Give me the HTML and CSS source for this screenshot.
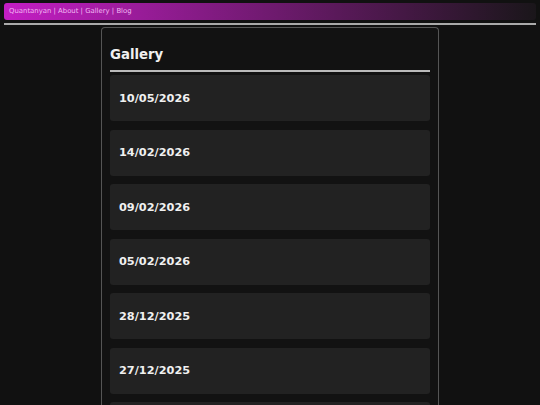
FILE: index.html
```html
<!DOCTYPE html>
<html lang="en">
  <head>
    <meta charset="UTF-8" />
    <meta name="viewport" content="width=device-width, initial-scale=1.0" />
    <title>Gallery</title>
    <link rel="stylesheet" href="styles.css">
  </head>
  <body>

      <div class="nav">
          <a href="#">Quantanyan</a> | <a href="#">About</a> | <a href="#">Gallery</a> | <a href="#">Blog</a>
      </div>
      <hr class="top-rule">

      <div class="page">
          <h2 class="title">Gallery</h2>
          <hr class="title-rule">

          <div class="list">
              <div class="entry">10/05/2026</div>
              <div class="entry">14/02/2026</div>
              <div class="entry">09/02/2026</div>
              <div class="entry">05/02/2026</div>
              <div class="entry">28/12/2025</div>
              <div class="entry">27/12/2025</div>
              <div class="entry">20/12/2025</div>
          </div>
      </div>

  </body>
</html>
```

FILE: styles.css
```css
body {
    margin: 3px 4px 0;
    background: #111;
    color: #eee;
    font-family: "DejaVu Sans", sans-serif;
}

.nav {
    height: 17px;
    padding: 0 5px;
    border-radius: 3px;
    background: linear-gradient(to right, #c41ec4, #1a161a);
    color: #f2b8f2;
    font-size: 6.9px;
    line-height: 17px;
}

.nav a {
    color: #f2b8f2;
    text-decoration: none;
}

.top-rule {
    margin: 3px 0 0;
    border: 0;
    border-top: 2px solid #aaa;
}

.page {
    width: 320px;
    margin: 2px auto 0;
    padding: 8px 8px 0;
    border: 1px solid #555;
    border-bottom: 0;
    border-radius: 4px 4px 0 0;
    background: #121212;
}

.title {
    margin: 11px 0 0;
    font-size: 13.3px;
    font-weight: bold;
    color: #f0f0f0;
}

.title-rule {
    margin: 8px 0 3px;
    border: 0;
    border-top: 2px solid #bbb;
}

.list {
    display: flex;
    flex-direction: column;
    gap: 8.5px;
}

.entry {
    display: flex;
    align-items: center;
    height: 46px;
    padding: 0 9px;
    border-radius: 3px;
    background: #222;
    font-size: 11.3px;
    font-weight: bold;
    color: #f0f0f0;
}
```
